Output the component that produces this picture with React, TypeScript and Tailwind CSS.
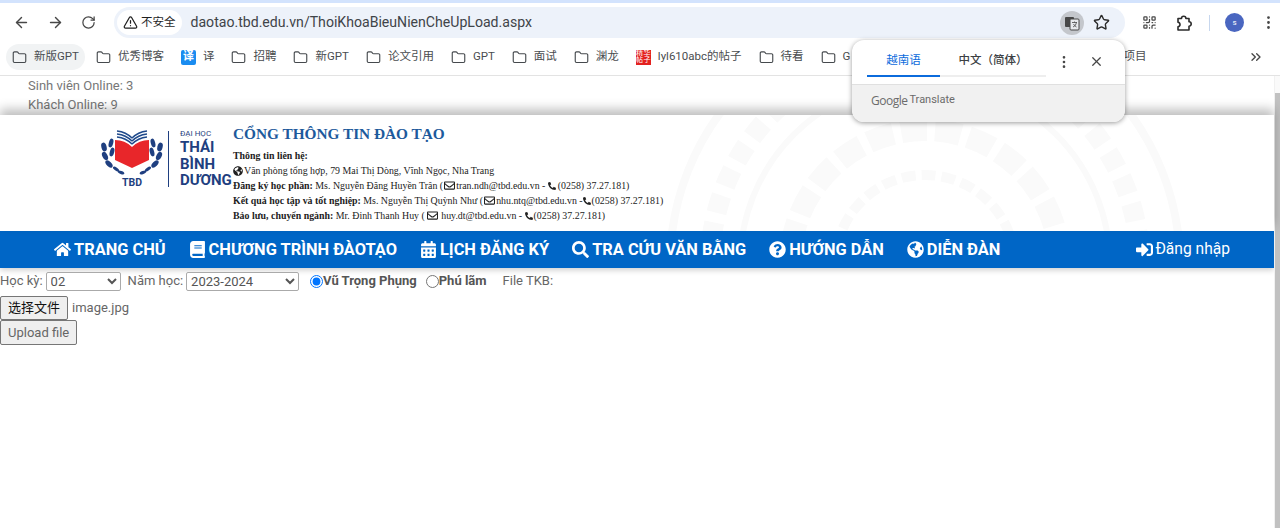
import {
  FaHome,
  FaBook,
  FaCalendarAlt,
  FaSearch,
  FaQuestionCircle,
  FaGlobeAmericas,
  FaSignInAlt,
  FaPhoneAlt,
  FaRegEnvelope,
} from 'react-icons/fa';
import {
  ArrowLeft,
  ArrowRight,
  RotateCw,
  TriangleAlert,
  Star,
  EllipsisVertical,
  Folder,
  X,
  ChevronsRight,
  QrCode,
} from 'lucide-react';

const BOOKMARKS = [
  { label: '新版GPT', active: true },
  { label: '优秀博客' },
  { label: '译', kind: 'translate' },
  { label: '招聘' },
  { label: '新GPT' },
  { label: '论文引用' },
  { label: 'GPT' },
  { label: '面试' },
  { label: '渊龙' },
  { label: 'lyl610abc的帖子', kind: 'stamp' },
  { label: '待看' },
];

const NAV_ITEMS = [
  { label: 'TRANG CHỦ', Icon: FaHome },
  { label: 'CHƯƠNG TRÌNH ĐÀOTẠO', Icon: FaBook },
  { label: 'LỊCH ĐĂNG KÝ', Icon: FaCalendarAlt },
  { label: 'TRA CỨU VĂN BẰNG', Icon: FaSearch },
  { label: 'HƯỚNG DẪN', Icon: FaQuestionCircle },
  { label: 'DIỄN ĐÀN', Icon: FaGlobeAmericas },
];

function Bookmark({ label, active, kind }: { label: string; active?: boolean; kind?: string }) {
  return (
    <div className={`flex h-[26px] shrink-0 items-center gap-[7px] rounded-full px-[6px] ${active ? 'bg-[#f1f3f4]' : ''}`}>
      {kind === 'translate' ? (
        <span className="flex h-[15px] w-[15px] items-center justify-center rounded-[2px] bg-[#1a8cf0] text-[11px] font-bold text-white">
          译
        </span>
      ) : kind === 'stamp' ? (
        <span className="grid h-[15px] w-[15px] grid-cols-2 bg-[#e3211f] text-center text-[7px] leading-[7.5px] text-white">
          <span>精</span>
          <span>华</span>
          <span>帖</span>
          <span>子</span>
        </span>
      ) : (
        <Folder size={15} strokeWidth={1.8} className="text-[#45494d]" />
      )}
      <span className="whitespace-nowrap text-[11.5px] text-[#4a4d50]">{label}</span>
    </div>
  );
}

function TbdLogo() {
  return (
    <div className="flex h-[60px] w-[134px] items-center">
      <svg width="68" height="60" viewBox="0 0 68 60" className="shrink-0">
        <path d="M16 11 Q26 11 33 18 Q40 11 50 11 L50 31 L33 39 L16 31 Z" fill="#e8262a" />
        <path d="M18 2 Q27 3 33 9 M18 5 Q27 6 33 12 M18 8 Q27 9 33 15 M48 2 Q39 3 33 9 M48 5 Q39 6 33 12 M48 8 Q39 9 33 15" stroke="#1f4a8c" strokeWidth="1.5" fill="none" />
        <g fill="#1f3f80">
          <ellipse cx="5" cy="18" rx="2.600" ry="4.500" transform="rotate(-15 5 18)" />
          <ellipse cx="12" cy="14" rx="2.200" ry="4.500" transform="rotate(15 12 14)" />
          <ellipse cx="6" cy="27" rx="2.600" ry="4.500" transform="rotate(-25 6 27)" />
          <ellipse cx="13" cy="23" rx="2.200" ry="4.500" transform="rotate(15 13 23)" />
          <ellipse cx="10" cy="35" rx="2.400" ry="4.500" transform="rotate(-45 10 35)" />
          <ellipse cx="61" cy="18" rx="2.600" ry="4.500" transform="rotate(15 61 18)" />
          <ellipse cx="54" cy="14" rx="2.200" ry="4.500" transform="rotate(-15 54 14)" />
          <ellipse cx="60" cy="27" rx="2.600" ry="4.500" transform="rotate(25 60 27)" />
          <ellipse cx="53" cy="23" rx="2.200" ry="4.500" transform="rotate(-15 53 23)" />
          <ellipse cx="56" cy="35" rx="2.400" ry="4.500" transform="rotate(45 56 35)" />
          <ellipse cx="17" cy="40" rx="3.500" ry="1.600" transform="rotate(35 17 40)" />
          <ellipse cx="22" cy="43.500" rx="3.500" ry="1.500" transform="rotate(20 22 43.500)" />
          <ellipse cx="49" cy="40" rx="3.500" ry="1.600" transform="rotate(-35 49 40)" />
          <ellipse cx="44" cy="43.500" rx="3.500" ry="1.500" transform="rotate(-20 44 43.500)" />
        </g>
        <text x="33" y="57" textAnchor="middle" fontSize="10.5" fontWeight="700" fill="#1f3f80" fontFamily="Roboto, sans-serif">
          TBD
        </text>
      </svg>
      <div className="ml-px h-[56px] w-px shrink-0 bg-[#1f3f80]" />
      <div className="ml-[11px] font-['Roboto',sans-serif] text-[#1f3f80]">
        <div className="text-[8px] leading-[10px]">ĐẠI HỌC</div>
        <div className="text-[15px] font-bold leading-[16.5px]">THÁI</div>
        <div className="text-[15px] font-bold leading-[16.5px]">BÌNH</div>
        <div className="text-[15px] font-bold leading-[16.5px]">DƯƠNG</div>
      </div>
    </div>
  );
}

export default function App() {
  return (
    <div className="relative flex h-[528px] w-[1280px] flex-col overflow-hidden bg-white font-['Roboto','Noto_Sans_CJK_SC',sans-serif] text-[#555]">
      {/* Browser toolbar */}
      <div className="h-[3px] bg-[#d3e3fd]" />
      <div className="flex h-[35px] items-end bg-white">
        <div className="flex h-[31px] w-[114px] items-center gap-[17px] pl-[13px] text-[#474747]">
          <ArrowLeft size={17} />
          <ArrowRight size={17} />
          <RotateCw size={15} />
        </div>
        <div className="flex h-[31px] w-[1011px] items-center rounded-full bg-[#edf2fa] pl-[3px] pr-[15px]">
          <div className="flex h-[25px] items-center gap-[3px] rounded-full bg-white px-[6px] text-[11.5px] text-[#1f1f1f]">
            <TriangleAlert size={15} />
            <span>不安全</span>
          </div>
          <span className="ml-[9px] text-[14.1px] text-[#3f4449]">daotao.tbd.edu.vn/ThoiKhoaBieuNienCheUpLoad.aspx</span>
          <div className="ml-auto flex items-center gap-[9px]">
            <span className="flex h-[24px] w-[24px] items-center justify-center rounded-full bg-[#c4c7cc]">
              <svg width="16" height="16" viewBox="0 0 16 16">
                <rect x="1" y="2" width="9" height="10" rx="1" fill="#474747" />
                <rect x="6" y="4" width="9" height="11" rx="1" fill="#e8eaed" stroke="#474747" />
                <path d="M8 7.500h5M10.500 6.500v1M9 12q3-1 3.500-4.500M9.500 9q1 2 3 3" stroke="#474747" strokeWidth="0.8" fill="none" />
              </svg>
            </span>
            <Star size={17} strokeWidth={2} className="text-[#2b2b2b]" />
          </div>
        </div>
        <div className="flex h-[31px] flex-1 items-center pl-[17px] text-[#474747]">
          <QrCode size={15} />
          <svg width="18" height="18" viewBox="0 0 18 18" className="ml-[18px]" fill="none" stroke="#2b2b2b" strokeWidth="1.6">
            <path d="M3 4.500h3.500a2.200 2.200 0 0 1 4.400 0H14v3.300a2.200 2.200 0 0 1 0 4.400V16H3v-3.200q2-.3 2-2.300t-2-2.300z" strokeLinejoin="round" />
          </svg>
          <div className="ml-[16px] h-[16px] w-px bg-[#c7d7ee]" />
          <span className="ml-[15px] flex h-[19px] w-[19px] items-center justify-center rounded-full bg-[#4a66c0] text-[8px] text-white">
            s
          </span>
          <EllipsisVertical size={17} className="ml-[16px]" />
        </div>
      </div>

      {/* Bookmarks bar */}
      <div className="flex h-[38px] items-center gap-[5px] border-b border-[#e3e3e3] bg-white pl-[6px] pr-[16px] pt-[1px]">
        {BOOKMARKS.map((b) => (
          <Bookmark key={b.label} label={b.label} active={b.active} kind={b.kind} />
        ))}
        {/* long title, the middle of it sits under the translate popup */}
        <div className="flex h-[26px] shrink-0 items-center gap-[7px] px-[6px]">
          <Folder size={15} strokeWidth={1.8} className="text-[#45494d]" />
          <span className="flex w-[304px] justify-between text-[11.5px] text-[#4a4d50]">
            <span>G</span>
            <span>项目</span>
          </span>
        </div>
        <ChevronsRight size={16} className="ml-auto text-[#474747]" />
      </div>

      {/* Page */}
      <div className="flex min-h-0 flex-1">
        <div className="min-w-0 flex-1">
          <div className="h-[39px] pl-[28px] text-[13px] leading-[19px] text-[#777]">
            <div>Sinh viên Online: 3</div>
            <div>Khách Online: 9</div>
          </div>

          <div className="relative h-[116px] overflow-hidden bg-white pl-[99px] pt-[9px] shadow-[0_-6px_10px_rgba(0,0,0,0.25)]">
            <svg width="560" height="116" viewBox="0 0 560 116" className="absolute left-[645px] top-0">
              <g fill="none" stroke="#fafafa">
                <circle cx="280" cy="150" r="90" strokeWidth="10" strokeDasharray="14 6" />
                <circle cx="280" cy="150" r="135" strokeWidth="22" strokeDasharray="26 8" />
                <circle cx="280" cy="150" r="185" strokeWidth="6" />
                <circle cx="280" cy="150" r="215" strokeWidth="20" strokeDasharray="18 10" />
                <circle cx="280" cy="150" r="255" strokeWidth="8" />
              </g>
            </svg>
            <div className="relative flex">
              <div className="pt-[5px]">
                <TbdLogo />
              </div>
              <div className="font-['Liberation_Serif',serif] text-[9.9px] leading-[15px] text-[#222]">
                <div className="mb-[4px] text-[15.3px] font-bold leading-[20px] text-[#1d5a9c]">CỔNG THÔNG TIN ĐÀO TẠO</div>
                <div className="font-bold">Thông tin liên hệ:</div>
                <div className="flex items-center whitespace-nowrap">
                  <FaGlobeAmericas size={10} className="mr-[1px]" />
                  Văn phòng tổng hợp, 79 Mai Thị Dòng, Vĩnh Ngọc, Nha Trang
                </div>
                <div className="flex items-center whitespace-nowrap">
                  <b>Đăng ký học phần:</b>&nbsp;Ms. Nguyễn Đăng Huyền Trân (
                  <FaRegEnvelope size={11} className="mx-[1px]" />
                  tran.ndh@tbd.edu.vn -&nbsp;
                  <FaPhoneAlt size={8} className="mr-[2px]" />
                  (0258) 37.27.181)
                </div>
                <div className="flex items-center whitespace-nowrap">
                  <b>Kết quả học tập và tốt nghiệp:</b>&nbsp;Ms. Nguyễn Thị Quỳnh Như (
                  <FaRegEnvelope size={11} className="mx-[1px]" />
                  nhu.ntq@tbd.edu.vn -
                  <FaPhoneAlt size={8} className="mr-[1px]" />
                  (0258) 37.27.181)
                </div>
                <div className="flex items-center whitespace-nowrap">
                  <b>Bảo lưu, chuyển ngành:</b>&nbsp;Mr. Đinh Thanh Huy (&nbsp;
                  <FaRegEnvelope size={11} className="mr-[3px]" />
                  huy.dt@tbd.edu.vn -&nbsp;
                  <FaPhoneAlt size={8} className="mr-[1px]" />
                  (0258) 37.27.181)
                </div>
              </div>
            </div>
          </div>

          {/* Main nav */}
          <nav className="flex h-[37px] items-center bg-[#0066c6] pl-[54px] pt-[1px] text-white shadow-[0_2px_6px_rgba(0,0,0,0.2)]">
            {NAV_ITEMS.map(({ label, Icon }) => (
              <div key={label} className="mr-[23px] flex items-center gap-[3px] whitespace-nowrap text-[16.4px] font-bold">
                <Icon size={17} />
                {label}
              </div>
            ))}
            <div className="ml-auto mr-[44px] flex items-center gap-[2px] text-[15.6px]">
              <FaSignInAlt size={17} />
              Đăng nhập
            </div>
          </nav>

          {/* Upload form */}
          <div className="pt-[3px] text-[13px]">
            <div className="flex h-[20px] items-center whitespace-nowrap text-[#666]">
              <span>Học kỳ:</span>
              <select defaultValue="02" className="ml-[3px] h-[19px] w-[75px] rounded-[2px] border border-[#aaa] bg-white text-[13px] text-[#555]">
                <option>02</option>
              </select>
              <span className="ml-[7px]">Năm học:</span>
              <select defaultValue="2023-2024" className="ml-[3px] h-[19px] w-[113px] rounded-[2px] border border-[#aaa] bg-white text-[13px] text-[#555]">
                <option>2023-2024</option>
              </select>
              <input type="radio" name="site" defaultChecked className="ml-[11px] h-[13px] w-[13px] accent-[#0075ff]" />
              <b className="text-[#555]">Vũ Trọng Phụng</b>
              <input type="radio" name="site" className="ml-[9px] h-[13px] w-[13px]" />
              <b className="text-[#555]">Phú lãm</b>
              <span className="ml-[16px]">File TKB:</span>
            </div>
            <div className="mt-[5px] flex h-[24px] items-center">
              <button type="button" className="h-[24px] rounded-[2px] border border-[#767676] bg-[#efefef] px-[7px] text-[13px] text-[#111]">
                选择文件
              </button>
              <span className="ml-[4px] text-[#666]">image.jpg</span>
            </div>
            <button type="button" className="h-[25px] rounded-[2px] border border-[#767676] bg-[#efefef] px-[7px] text-[13px] text-[#666]">
              Upload file
            </button>
          </div>
        </div>

        {/* Scrollbar */}
        <div className="w-[6px] shrink-0 border-l border-[#f1f1f1] bg-[#fafafa]">
          <div className="mt-[17px] h-[435px] bg-[#c1c1c1]" />
        </div>
      </div>

      {/* Translate popup */}
      <div className="absolute left-[852px] top-[40px] h-[82px] w-[273px] overflow-hidden rounded-[12px] bg-white shadow-[0_1px_5px_rgba(0,0,0,0.4)]">
        <div className="flex h-[44px] items-start pl-[15px]">
          <div className="flex h-[37px] w-[73px] items-center justify-center border-b-2 border-[#0b6bdc] pt-[7px] text-[11.5px] text-[#0b6bdc]">
            越南语
          </div>
          <div className="flex h-[37px] w-[106px] items-center justify-center border-b-2 border-[#eeeeee] pt-[7px] text-[11.5px] font-medium text-[#3c4043]">
            中文（简体）
          </div>
        </div>
        <EllipsisVertical size={16} className="absolute left-[204px] top-[14px] text-[#474747]" />
        <X size={15} className="absolute left-[237px] top-[14px] text-[#474747]" />
        <div className="flex h-[38px] items-center border-t border-[#e0e0e0] bg-[#f1f1f1] pb-[6px] pl-[19px] text-[12px] text-[#6b6b6b]">
          <span className="font-['Open_Sans',sans-serif] tracking-[-0.5px]">Google</span>
          <span className="ml-[2px] text-[11px]">Translate</span>
        </div>
      </div>
    </div>
  );
}
